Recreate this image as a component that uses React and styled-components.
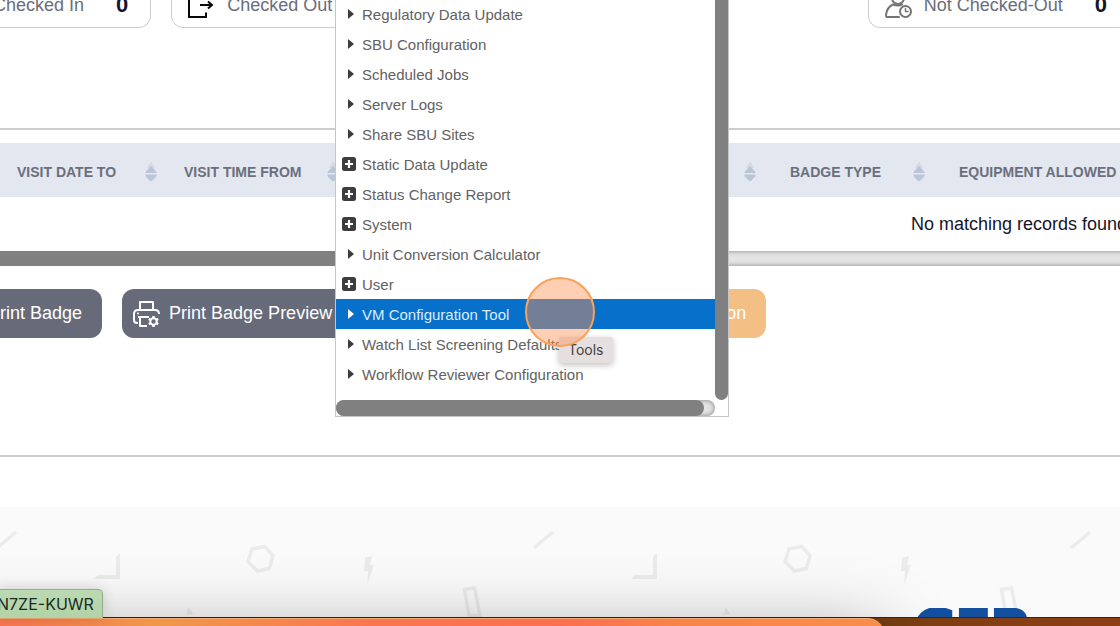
import React from "react";
import styled, { createGlobalStyle, css } from "styled-components";

const GlobalStyle = createGlobalStyle`
  *, *::before, *::after { box-sizing: border-box; }
  body {
    margin: 0;
    background: #fff;
    font-family: "Liberation Sans", Arial, sans-serif;
    overflow: hidden;
  }
  button { font: inherit; color: inherit; border: 0; background: none; padding: 0; cursor: pointer; }
`;

const Page = styled.div`
  position: relative;
  display: flex;
  flex-direction: column;
  min-height: 100vh;
  overflow: hidden;
`;

const StatusRow = styled.section`
  display: flex;
  gap: 20px;
  margin: -18px -10px 0 -63px;
`;

const StatusCard = styled.div`
  display: flex;
  align-items: center;
  height: 46px;
  padding: 0 22px 0 16px;
  border: 1px solid #cbcbcb;
  border-radius: 12px;
  white-space: nowrap;
  ${(p) => p.$last && css`margin-left: auto;`}
  svg { flex: none; }
`;

const StatusLabel = styled.span`
  margin: 0 32px 0 12px;
  font-size: 18px;
  color: #6a6d7b;
`;

const StatusCount = styled.strong`
  font-size: 22px;
  color: #15152a;
`;

const TableArea = styled.section`
  margin-top: 100px;
  padding-top: 13px;
  border-top: 2px solid #cdcdcd;
`;

const TableViewport = styled.div`
  overflow: hidden;
`;

const Table = styled.table`
  width: 2038px;
  table-layout: fixed;
  border-collapse: collapse;
`;

const HeadCell = styled.th`
  width: ${(p) => p.$width};
  height: 54px;
  padding: 3px 10px 0 ${(p) => (p.$wide ? 24 : 17)}px;
  background: #e3e7f0;
  text-align: left;
`;

const SortButton = styled.button`
  display: flex;
  align-items: center;
  justify-content: space-between;
  width: 100%;
  font-size: 14px;
  font-weight: bold;
  line-height: 20px;
  color: #6b6f7d;
  white-space: nowrap;
`;

const EmptyCell = styled.td`
  height: 54px;
  padding: 0;
  text-align: center;
  font-size: 18px;
  color: #15152a;
`;

const HorizontalTrack = styled.div`
  height: ${(p) => (p.$menu ? 16 : 15)}px;
  margin-right: ${(p) => (p.$menu ? 13 : -20)}px;
  background: #e4e4e4;
  box-shadow: inset 0 0 5px #808080;
  ${(p) => p.$menu && css`border-radius: 8px;`}
`;

const HorizontalThumb = styled.div`
  width: ${(p) => p.$size};
  height: 100%;
  background: #808080;
  border-radius: ${(p) => (p.$menu ? "8px" : "0 8px 8px 0")};
`;

const ActionRow = styled.section`
  display: flex;
  gap: 20px;
  margin: 23px 0 0 -59px;
  padding-bottom: 117px;
  border-bottom: 2px solid #cdcdcd;
`;

const ActionButton = styled.button`
  display: flex;
  flex: none;
  align-items: center;
  gap: 9px;
  height: 49px;
  padding: 0 20px 0 11px;
  border-radius: 12px;
  background: ${(p) => (p.$accent ? "#f4bf85" : "#676b79")};
  color: #fff;
  font-size: 18px;
  white-space: nowrap;
  ${(p) => p.$accent && css`
    width: 394px;
    justify-content: flex-end;
  `}
`;

const Footer = styled.footer`
  position: relative;
  display: flex;
  flex: 1;
  flex-direction: column;
  justify-content: flex-end;
  min-height: 110px;
  margin-top: 50px;
  background: #fafafa;
`;

const FooterPattern = styled.svg`
  position: absolute;
  inset: 0;
  width: 100%;
  height: 100%;
`;

const Logo = styled.svg`
  position: relative;
  display: block;
  align-self: flex-end;
  width: 116px;
  height: 9px;
  margin-right: 90px;
  font: bold 51px "DejaVu Sans", sans-serif;
  fill: #1350a0;
  stroke: #1350a0;
  stroke-width: 3;
`;

const Desktop = styled.div`
  position: relative;
  height: 9px;
  background: linear-gradient(90deg, #793f12 79%, #8f3d13);
  border-top: 1px solid #3a2413;
`;

const BackWindow = styled.div`
  position: absolute;
  top: 0;
  left: -60px;
  right: 21%;
  height: 160px;
  border-top: 1px solid #f5ab72;
  border-radius: 0 18px 0 0;
  background: linear-gradient(90deg, #f97550 60px, #ef9849 220px, #fb7650 430px, #fc6e50 620px, #f88449 740px, #f98d4b);
  box-shadow: 0 14px 70px rgba(0, 0, 0, 0.34);
`;

const LinkStatus = styled.div`
  position: absolute;
  left: 0;
  bottom: 8px;
  height: 29px;
  padding: 0 8px 0 0;
  margin-left: -3px;
  border: 1px solid #94ad8e;
  border-width: 1px 1px 0 0;
  border-radius: 0 5px 0 0;
  background: linear-gradient(#bbdab2, #b2d2a8);
  box-shadow: 0 0 14px rgba(0, 0, 0, 0.15);
  font: 16px/28px Inter, sans-serif;
  color: #1b2a24;
`;

const Menu = styled.nav`
  position: absolute;
  top: 0;
  left: 335px;
  width: 394px;
  border: 1px solid #c6c6c6;
  border-top: 0;
  background: #fff;
`;

const MenuBody = styled.div`
  display: flex;
  height: 400px;
`;

const MenuList = styled.ul`
  flex: 1;
  margin: -1px 0 0;
  padding: 0;
  list-style: none;
`;

const MenuItem = styled.button`
  display: flex;
  align-items: center;
  width: 100%;
  height: 30px;
  padding-left: 6px;
  gap: 6px;
  font-size: 15px;
  text-align: left;
  color: ${(p) => (p.$active ? "#dcecfa" : "#626262")};
  background: ${(p) => (p.$active ? "#0670cb" : "transparent")};
  svg {
    width: 14px;
    height: 14px;
    fill: ${(p) => (p.$active ? "#fff" : "#3d3d3d")};
  }
`;

const VerticalThumb = styled.div`
  width: 13px;
  background: #808080;
  border-radius: 0 0 7px 7px;
`;

const Tooltip = styled.div`
  position: absolute;
  top: 337px;
  left: 559px;
  padding: 0 9px;
  border-radius: 3px;
  background: #e6dfdf;
  box-shadow: 0 2px 6px rgba(0, 0, 0, 0.25);
  font: 14px/26px Inter, sans-serif;
  color: #454141;
`;

const ClickMarker = styled.div`
  position: absolute;
  top: 277px;
  left: 525px;
  width: 70px;
  height: 70px;
  border: 2px solid #fba25a;
  border-radius: 50%;
  background: rgba(255, 146, 84, 0.44);
`;

const SortIcon = () => (
  <svg width="12" height="22" viewBox="0 0 12 22" aria-hidden="true">
    <path d="M6 0L10 7H2Z" fill="#d6d9de" />
    <path d="M6 5L11.5 11V12H.5V11Z" fill="#b9c5d8" />
    <path d="M.5 13.500H11.5V15L7 20H5L.5 15Z" fill="#b9c5d8" />
  </svg>
);

const CheckedOutIcon = () => (
  <svg width="27" height="28" viewBox="0 0 27 28" fill="none" stroke="#090909" strokeWidth="2" aria-hidden="true">
    <path d="M18 7V2H1V26H18V21.500" />
    <path d="M12 14H24M20 10.500L24 14L20 17.500" />
  </svg>
);

const PersonClockIcon = () => (
  <svg width="27" height="28" viewBox="0 0 27 28" fill="none" stroke="#747474" strokeWidth="2" strokeLinecap="round" strokeLinejoin="round" aria-hidden="true">
    <circle cx="13" cy="7" r="6" />
    <path d="M14 26H2Q1 26 1 24Q2 16 8 13.500Q13 15.500 17 13.500" />
    <circle cx="20.500" cy="20.500" r="5.500" />
    <path d="M20.500 17.500V20.500H23" strokeWidth="1.500" />
  </svg>
);

const PrinterIcon = () => (
  <svg width="27" height="28" viewBox="0 0 27 28" fill="none" stroke="#fff" strokeWidth="2" strokeLinejoin="round" aria-hidden="true">
    <path d="M7 10V2H20V10" />
    <path d="M5 23H4Q1 23 1 20V14Q1 10 5 10H22Q26 10 26 14" />
    <path d="M5 17H16M7 17V26H14" />
    <circle cx="5" cy="13.500" r="1" fill="#fff" stroke="none" />
    <circle cx="20.500" cy="21.500" r="3.200" />
    <path d="M20.500 16V18.500M20.500 24.500V27M15.800 18.800L18 20M23 23L25.200 24.200M15.800 24.200L18 23M23 20L25.200 18.800" strokeWidth="2.500" />
  </svg>
);

const ArrowIcon = () => (
  <svg viewBox="0 0 14 14" aria-hidden="true"><path d="M6 2L12 7L6 12Z" /></svg>
);

const PlusIcon = () => (
  <svg viewBox="0 0 14 14" aria-hidden="true">
    <rect width="14" height="14" rx="2.500" />
    <path d="M7 3V11M3 7H11" stroke="#fff" strokeWidth="2.200" />
  </svg>
);

const columns = [
  { label: "VISIT DATE TO", width: "167px" },
  { label: "VISIT TIME FROM", width: "182px" },
  { label: "", width: "417px" },
  { label: "BADGE TYPE", width: "169px", wide: true },
  { label: "EQUIPMENT ALLOWED", width: "auto", wide: true },
];

const menuItems = [
  { label: "Regulatory Data Update" },
  { label: "SBU Configuration" },
  { label: "Scheduled Jobs" },
  { label: "Server Logs" },
  { label: "Share SBU Sites" },
  { label: "Static Data Update", group: true },
  { label: "Status Change Report", group: true },
  { label: "System", group: true },
  { label: "Unit Conversion Calculator" },
  { label: "User", group: true },
  { label: "VM Configuration Tool", active: true },
  { label: "Watch List Screening Defaults" },
  { label: "Workflow Reviewer Configuration" },
];

export default function App() {
  return (
    <Page>
      <GlobalStyle />
      <StatusRow>
        <StatusCard>
          <CheckedOutIcon />
          <StatusLabel>Checked In</StatusLabel>
          <StatusCount>0</StatusCount>
        </StatusCard>
        <StatusCard>
          <CheckedOutIcon />
          <StatusLabel>Checked Out</StatusLabel>
        </StatusCard>
        <StatusCard $last>
          <PersonClockIcon />
          <StatusLabel>Not Checked-Out</StatusLabel>
          <StatusCount>0</StatusCount>
        </StatusCard>
      </StatusRow>

      <TableArea>
        <TableViewport>
          <Table>
            <thead>
              <tr>
                {columns.map((c, i) => (
                  <HeadCell key={i} $width={c.width} $wide={c.wide}>
                    <SortButton>
                      <span>{c.label}</span>
                      <SortIcon />
                    </SortButton>
                  </HeadCell>
                ))}
              </tr>
            </thead>
            <tbody>
              <tr>
                <EmptyCell colSpan={5}>No matching records found</EmptyCell>
              </tr>
            </tbody>
          </Table>
        </TableViewport>
        <HorizontalTrack>
          <HorizontalThumb $size="50%" />
        </HorizontalTrack>
      </TableArea>

      <ActionRow>
        <ActionButton><PrinterIcon />Print Badge</ActionButton>
        <ActionButton><PrinterIcon />Print Badge Preview</ActionButton>
        <ActionButton $accent>Action</ActionButton>
      </ActionRow>

      <Footer>
        <FooterPattern aria-hidden="true">
          <defs>
            <pattern id="shapes" x="-20" y="0" width="537" height="110" patternUnits="userSpaceOnUse">
              <g fill="#ebebeb">
                <path d="M140 46V72H114L118 68H136V50Z" />
                <path d="M385 50.700L392 49L390.300 58.300L394 57.700L387.300 77.300L388 64H384Z" />
                <path d="M208.300 99.700L206.700 108L213.300 106.700Z" />
              </g>
              <g fill="none" stroke="#ebebeb" strokeWidth="3.500">
                <path d="M17 41L36 25" />
                <path d="M272 42L284.500 39.500L293 48.500L289.500 61.500L277.500 64L268 54.500Z" />
                <path d="M484.500 82.500L494.500 81L500 108.500H489Z" />
              </g>
            </pattern>
          </defs>
          <rect width="100%" height="110" fill="url(#shapes)" />
        </FooterPattern>
        <Logo role="img" aria-label="GEP"><text x="0" y="39">GEP</text></Logo>
      </Footer>

      <Desktop><BackWindow /></Desktop>
      <LinkStatus>N7ZE-KUWR</LinkStatus>

      <Menu aria-label="Tools">
        <MenuBody>
          <MenuList>
            {menuItems.map((m) => (
              <li key={m.label}>
                <MenuItem $active={m.active}>
                  {m.group ? <PlusIcon /> : <ArrowIcon />}
                  {m.label}
                </MenuItem>
              </li>
            ))}
          </MenuList>
          <VerticalThumb />
        </MenuBody>
        <HorizontalTrack $menu>
          <HorizontalThumb $menu $size="368px" />
        </HorizontalTrack>
      </Menu>
      <Tooltip role="tooltip">Tools</Tooltip>
      <ClickMarker />
    </Page>
  );
}
